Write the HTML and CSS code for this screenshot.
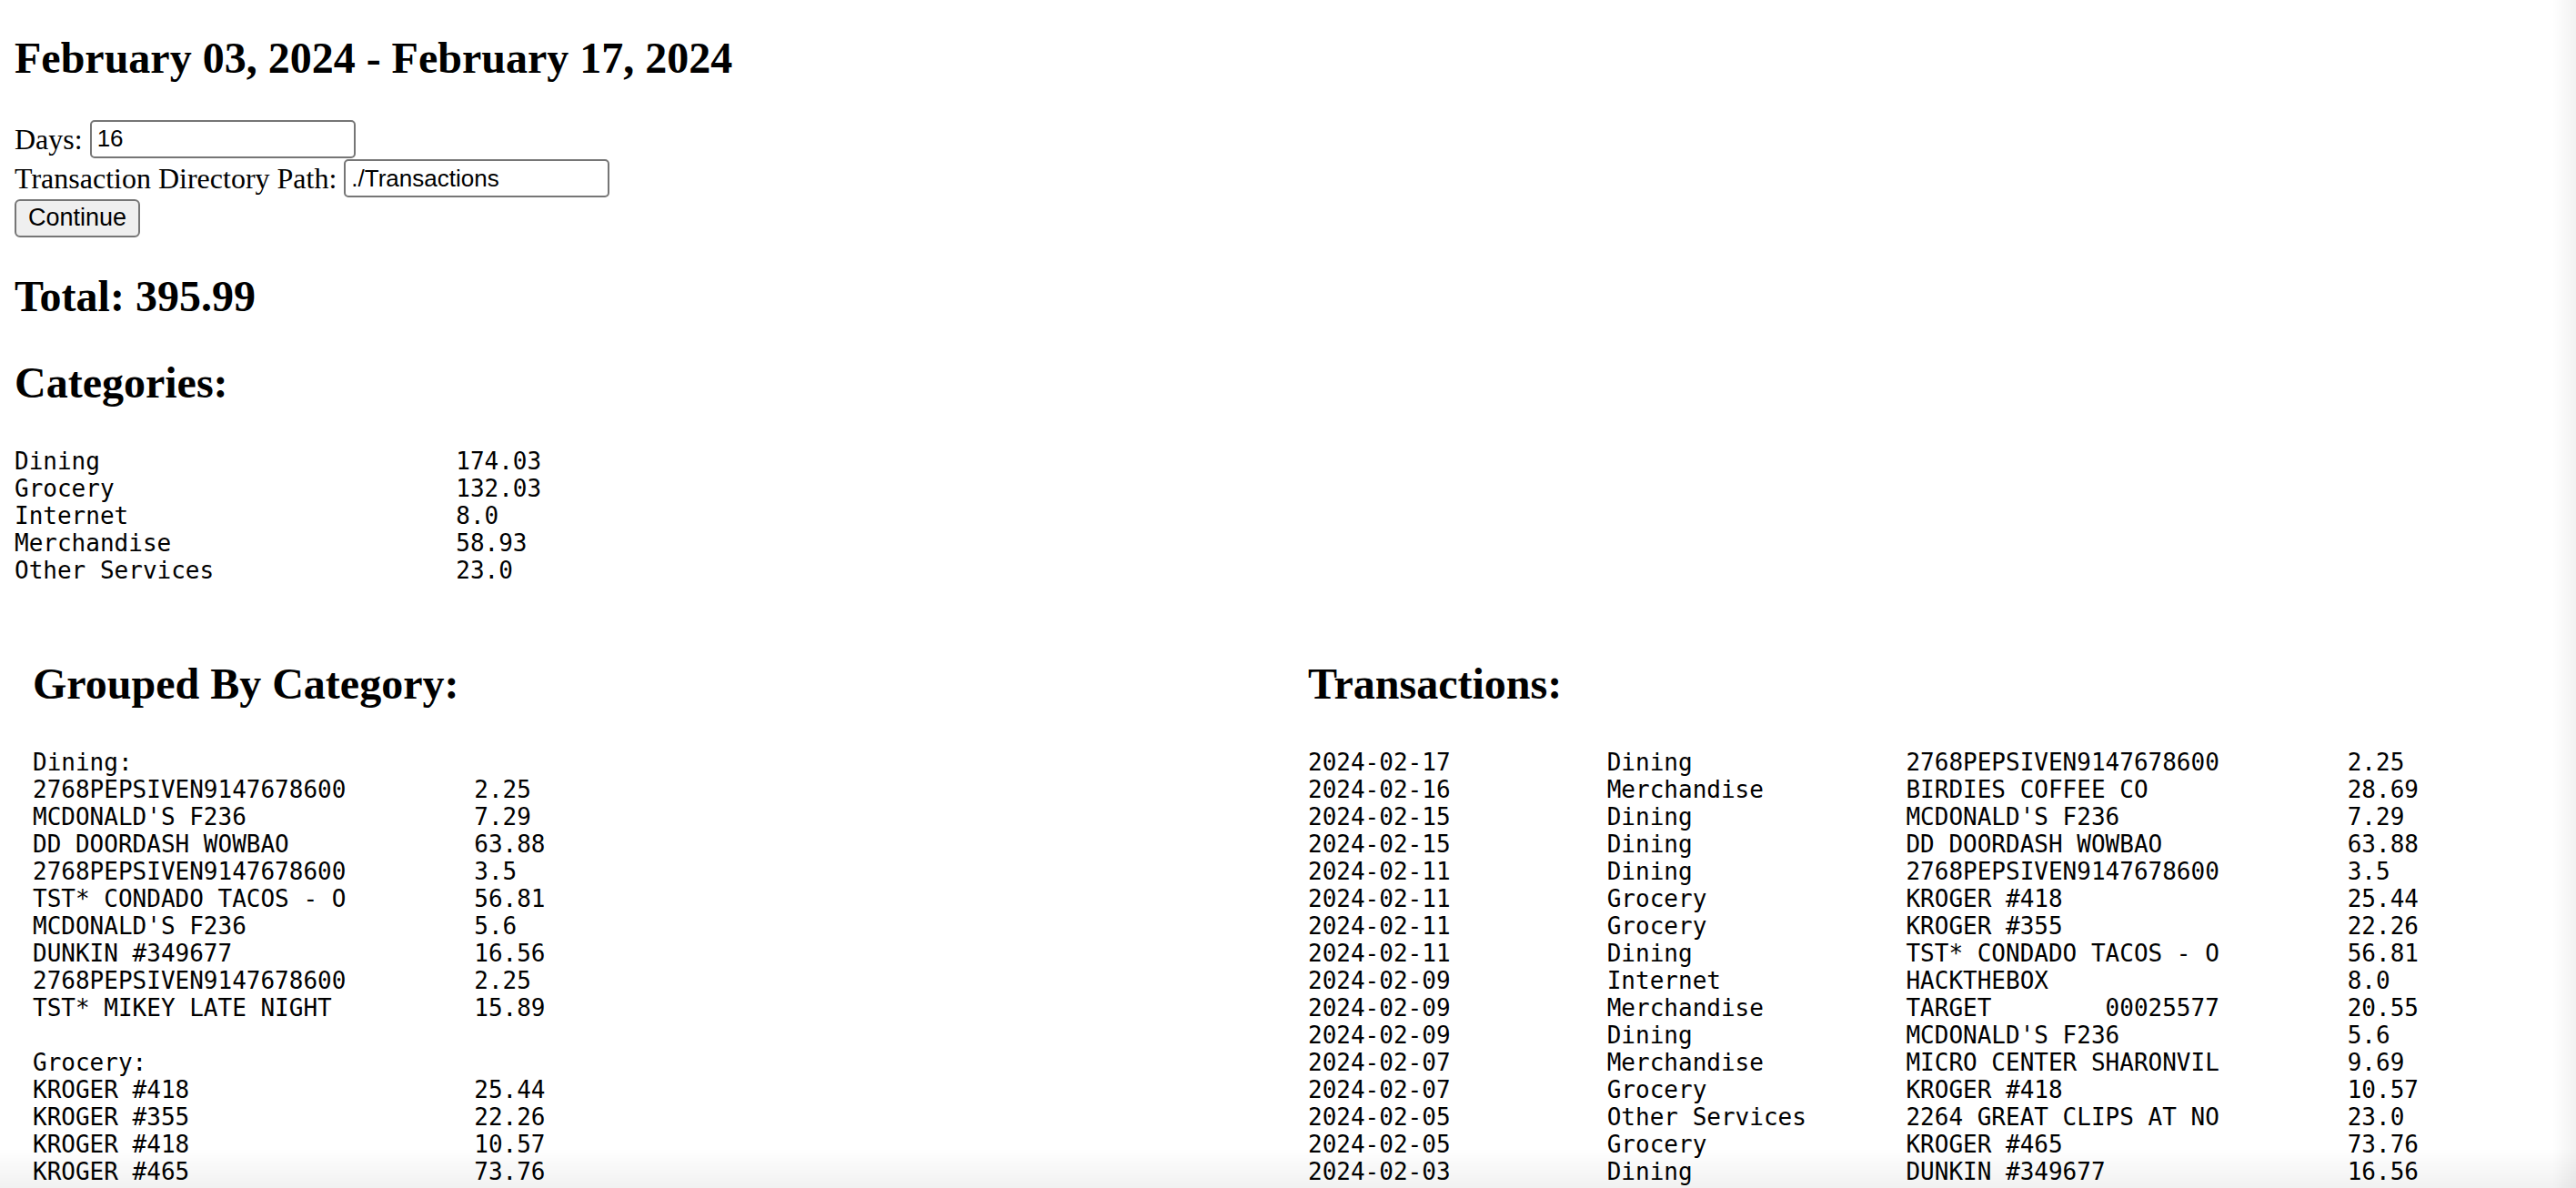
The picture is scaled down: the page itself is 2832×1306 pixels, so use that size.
FILE: index.html
```html
<!DOCTYPE html>
<html lang="en">
<head>
<meta charset="utf-8">
<title>Transactions</title>
<link rel="stylesheet" href="styles.css">
</head>
<body>
<h2 class="heading page-title">February 03, 2024 - February 17, 2024</h2>

<form class="form">
  <div class="form-row">
    <label class="label" for="days">Days:</label>
    <input class="text-input" id="days" type="text" value="16">
  </div>
  <div class="form-row">
    <label class="label" for="path">Transaction Directory Path:</label>
    <input class="text-input" id="path" type="text" value="./Transactions">
  </div>
  <div class="form-row">
    <button class="button" type="button">Continue</button>
  </div>
</form>

<h2 class="heading">Total: 395.99</h2>
<h2 class="heading">Categories:</h2>

<div class="mono-table cat-table">
  <span>Dining</span><span>174.03</span>
  <span>Grocery</span><span>132.03</span>
  <span>Internet</span><span>8.0</span>
  <span>Merchandise</span><span>58.93</span>
  <span>Other Services</span><span>23.0</span>
</div>

<div class="columns">
  <section class="column">
    <h2 class="heading">Grouped By Category:</h2>
    <div class="mono-table group-table">
      <span class="group-title">Dining:</span>
      <span>2768PEPSIVEN9147678600</span><span>2.25</span>
      <span>MCDONALD'S F236</span><span>7.29</span>
      <span>DD DOORDASH WOWBAO</span><span>63.88</span>
      <span>2768PEPSIVEN9147678600</span><span>3.5</span>
      <span>TST* CONDADO TACOS - O</span><span>56.81</span>
      <span>MCDONALD'S F236</span><span>5.6</span>
      <span>DUNKIN #349677</span><span>16.56</span>
      <span>2768PEPSIVEN9147678600</span><span>2.25</span>
      <span>TST* MIKEY LATE NIGHT</span><span>15.89</span>
      <span class="group-title spaced">Grocery:</span>
      <span>KROGER #418</span><span>25.44</span>
      <span>KROGER #355</span><span>22.26</span>
      <span>KROGER #418</span><span>10.57</span>
      <span>KROGER #465</span><span>73.76</span>
      <span class="group-title spaced">Internet:</span>
      <span>HACKTHEBOX</span><span>8.0</span>
      <span class="group-title spaced">Merchandise:</span>
      <span>BIRDIES COFFEE CO</span><span>28.69</span>
      <span>TARGET        00025577</span><span>20.55</span>
      <span>MICRO CENTER SHARONVIL</span><span>9.69</span>
      <span class="group-title spaced">Other Services:</span>
      <span>2264 GREAT CLIPS AT NO</span><span>23.0</span>
    </div>
  </section>

  <section class="column">
    <h2 class="heading">Transactions:</h2>
    <div class="mono-table tx-table">
      <span>2024-02-17</span><span>Dining</span><span>2768PEPSIVEN9147678600</span><span>2.25</span>
      <span>2024-02-16</span><span>Merchandise</span><span>BIRDIES COFFEE CO</span><span>28.69</span>
      <span>2024-02-15</span><span>Dining</span><span>MCDONALD'S F236</span><span>7.29</span>
      <span>2024-02-15</span><span>Dining</span><span>DD DOORDASH WOWBAO</span><span>63.88</span>
      <span>2024-02-11</span><span>Dining</span><span>2768PEPSIVEN9147678600</span><span>3.5</span>
      <span>2024-02-11</span><span>Grocery</span><span>KROGER #418</span><span>25.44</span>
      <span>2024-02-11</span><span>Grocery</span><span>KROGER #355</span><span>22.26</span>
      <span>2024-02-11</span><span>Dining</span><span>TST* CONDADO TACOS - O</span><span>56.81</span>
      <span>2024-02-09</span><span>Internet</span><span>HACKTHEBOX</span><span>8.0</span>
      <span>2024-02-09</span><span>Merchandise</span><span>TARGET        00025577</span><span>20.55</span>
      <span>2024-02-09</span><span>Dining</span><span>MCDONALD'S F236</span><span>5.6</span>
      <span>2024-02-07</span><span>Merchandise</span><span>MICRO CENTER SHARONVIL</span><span>9.69</span>
      <span>2024-02-07</span><span>Grocery</span><span>KROGER #418</span><span>10.57</span>
      <span>2024-02-05</span><span>Other Services</span><span>2264 GREAT CLIPS AT NO</span><span>23.0</span>
      <span>2024-02-05</span><span>Grocery</span><span>KROGER #465</span><span>73.76</span>
      <span>2024-02-03</span><span>Dining</span><span>DUNKIN #349677</span><span>16.56</span>
      <span>2024-02-03</span><span>Dining</span><span>2768PEPSIVEN9147678600</span><span>2.25</span>
      <span>2024-02-03</span><span>Dining</span><span>TST* MIKEY LATE NIGHT</span><span>15.89</span>
    </div>
  </section>
</div>
</body>
</html>
```

FILE: styles.css
```css
html {
  background: #ffffff;
}

body {
  margin: 0;
  padding: 0 16px 16px;
  font-family: "Liberation Serif", "Times New Roman", serif;
  font-size: 32px;
  color: #000000;
}

body::after {
  content: "";
  position: fixed;
  inset: 0;
  pointer-events: none;
  background:
    linear-gradient(to top, rgba(0, 0, 0, 0.055), rgba(0, 0, 0, 0) 44px),
    linear-gradient(to left, rgba(0, 0, 0, 0.05), rgba(0, 0, 0, 0) 26px);
}

.heading {
  font-size: 48px;
  font-weight: bold;
  line-height: 48px;
  padding-bottom: 7px;
  margin: 40px 0;
}

.page-title {
  margin-top: 40px;
  margin-bottom: 36px;
}

.form {
  margin: 0;
  display: flex;
  flex-direction: column;
}

.form-row {
  display: flex;
  align-items: center;
  height: 43.5px;
  gap: 8px;
}

.label {
  font-size: 32px;
  line-height: 36px;
}

.text-input {
  box-sizing: border-box;
  width: 292px;
  height: 42px;
  margin: 0;
  padding: 2px 6px;
  border: 2px solid #767676;
  border-radius: 5px;
  background: #ffffff;
  font-family: "Liberation Sans", Arial, sans-serif;
  font-size: 26px;
  color: #000000;
}

.button {
  box-sizing: border-box;
  height: 42px;
  width: 138px;
  margin: 0;
  padding: 0 12px;
  border: 2px solid #767676;
  border-radius: 6px;
  background: #efefef;
  font-family: "Liberation Sans", Arial, sans-serif;
  font-size: 27px;
  color: #000000;
}

.mono-table {
  display: grid;
  font-family: "DejaVu Sans Mono", "Liberation Mono", monospace;
  font-size: 26px;
  line-height: 30px;
  white-space: pre;
  margin: 26px 0;
}

.cat-table {
  grid-template-columns: 31ch auto;
  justify-content: start;
}

.columns {
  display: flex;
  gap: 4px;
}

.column {
  flex: 1 1 0;
  min-width: 0;
  padding: 20px;
}

.group-table {
  grid-template-columns: 31ch auto;
  justify-content: start;
}

.group-title {
  grid-column: 1 / -1;
}

.group-title.spaced {
  margin-top: 30px;
}

.tx-table {
  grid-template-columns: 21ch 21ch 31ch auto;
  justify-content: start;
}
```
